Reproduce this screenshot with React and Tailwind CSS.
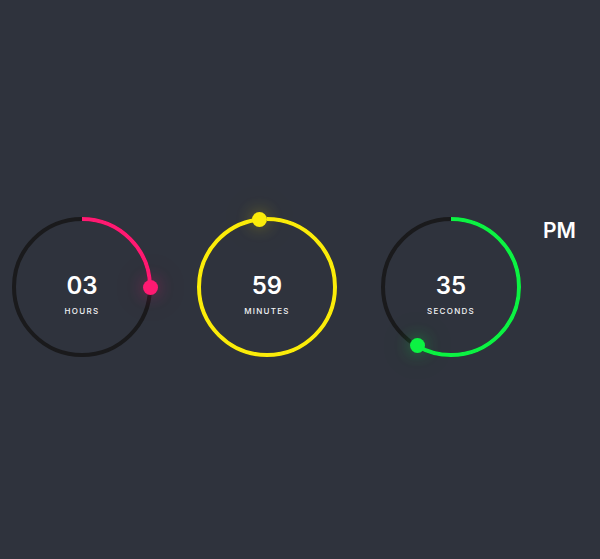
import React from "react";

const R = 68;
const C = 2 * Math.PI * R;

function Ring({ value, max, label, color, glow }) {
  const frac = value / max;
  const angle = frac * 2 * Math.PI;
  const dx = 75 + R * Math.sin(angle);
  const dy = 75 - R * Math.cos(angle);
  return (
    <div className="relative w-[150px] h-[150px] shrink-0">
      <svg width="150" height="150" className="absolute inset-0">
        <circle cx="75" cy="75" r={R} fill="none" stroke="#1a1a1c" strokeWidth="4" />
        <circle
          cx="75"
          cy="75"
          r={R}
          fill="none"
          stroke={color}
          strokeWidth="4"
          strokeDasharray={`${C * frac} ${C}`}
          transform="rotate(-90 75 75)"
        />
      </svg>
      <div
        className={`absolute w-[15px] h-[15px] rounded-full ${glow}`}
        style={{ left: dx - 7.5, top: dy - 7.5, backgroundColor: color }}
      />
      <div className="absolute inset-0 flex flex-col items-center justify-center pt-[14px]">
        <div className="text-[24px] leading-none font-semibold text-white">{value.toString().padStart(2, "0")}</div>
        <div className="text-[8px] leading-none font-medium tracking-[0.16em] text-gray-100 mt-[9px] uppercase">{label}</div>
      </div>
    </div>
  );
}

export default function App() {
  return (
    <div
      className="h-[559px] w-full bg-[#2f333d] flex items-center"
      style={{ fontFamily: "Inter, 'Open Sans', sans-serif" }}
    >
      <div className="flex items-start pl-[7px] mt-[15px]">
        <Ring value={3} max={12} label="Hours" color="#ff1a72" glow="shadow-[0_0_16px_rgba(255,26,114,0.4),0_0_44px_rgba(255,26,114,0.2)]" />
        <div className="ml-[35px]">
          <Ring value={59} max={60} label="Minutes" color="#fbec0a" glow="shadow-[0_0_16px_rgba(251,236,10,0.35),0_0_44px_rgba(251,236,10,0.2)]" />
        </div>
        <div className="ml-[34px]">
          <Ring value={35} max={60} label="Seconds" color="#0cf243" glow="shadow-[0_0_16px_rgba(12,242,67,0.4),0_0_44px_rgba(12,242,67,0.2)]" />
        </div>
        <div className="ml-[17px] mt-[8px] text-[21px] leading-none font-semibold text-white">PM</div>
      </div>
    </div>
  );
}
